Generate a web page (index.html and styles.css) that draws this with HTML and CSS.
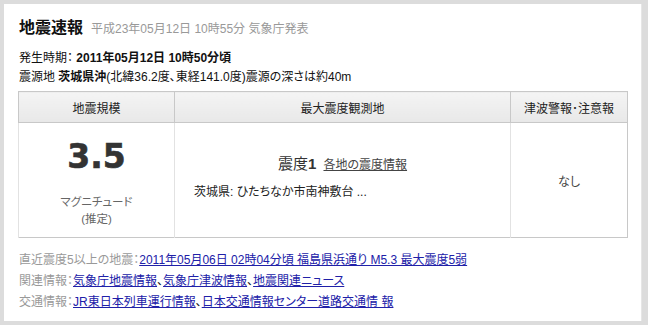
FILE: index.html
```html
<!DOCTYPE html>
<html lang="ja">
<head>
<meta charset="utf-8">
<title>地震速報</title>
<link rel="stylesheet" href="styles.css">
</head>
<body>
<div class="panel">
  <div class="title-row">
    <h1 class="title">地震速報</h1>
    <span class="issued">平成23年05月12日 10時55分 気象庁発表</span>
  </div>
  <div class="meta first">発生時期： <b>2011年05月12日 10時50分頃</b></div>
  <div class="meta">震源地 <b>茨城県沖</b>(北緯36.2度、東経141.0度)震源の深さは約40m</div>
  <table class="quake">
    <thead>
      <tr>
        <th class="c1">地震規模</th>
        <th class="c2">最大震度観測地</th>
        <th class="c3">津波警報･注意報</th>
      </tr>
    </thead>
    <tbody>
      <tr class="body-row">
        <td class="c1">
          <div class="mag">3.5</div>
          <div class="mag-label">マグニチュード<br>(推定)</div>
        </td>
        <td class="c2">
          <div class="intensity">震度<b>1</b> <a href="#" class="local">各地の震度情報</a></div>
          <div class="place">茨城県: ひたちなか市南神敷台 ...</div>
        </td>
        <td class="c3">なし</td>
      </tr>
    </tbody>
  </table>
  <div class="links">
    <div class="link-row"><span class="label">直近震度5以上の地震：</span><a href="#">2011年05月06日 02時04分頃 福島県浜通り M5.3 最大震度5弱</a></div>
    <div class="link-row"><span class="label">関連情報：</span><a href="#">気象庁地震情報</a>、<a href="#">気象庁津波情報</a>、<a href="#">地震関連ニュース</a></div>
    <div class="link-row"><span class="label">交通情報：</span><a href="#">JR東日本列車運行情報</a>、<a href="#">日本交通情報センター道路交通情 報</a></div>
  </div>
</div>
</body>
</html>
```

FILE: styles.css
```css
html, body {
  margin: 0;
  padding: 0;
}
body {
  background: #dcdcdc;
  padding: 4px 6px 4px 4px;
  font-family: "Liberation Sans", "Noto Sans CJK JP", sans-serif;
  font-size: 12px;
  color: #111;
  font-feature-settings: "palt";
}
.panel {
  background: #fff;
  border-right: 1px solid #e6e6e6;
  padding: 12px 15px 9px 14px;
  height: 296px;
}
.title-row {
  display: flex;
  align-items: baseline;
  gap: 8px;
  height: 24px;
  padding-left: 1px;
}
.title {
  margin: 0;
  font-size: 16px;
  font-weight: bold;
  line-height: 24px;
}
.issued {
  color: #999;
  font-size: 12px;
}
.meta {
  line-height: 19px;
  padding-left: 1px;
}
.meta.first {
  margin-top: 9px;
}
.meta b {
  font-weight: bold;
}
.quake {
  width: 609px;
  margin-top: 4px;
  border-collapse: collapse;
  border: 1px solid #c8c8c8;
  table-layout: fixed;
}
.quake th {
  height: 30px;
  padding: 0;
  font-weight: normal;
  font-size: 12px;
  background: linear-gradient(#f4f4f4, #e8e8e8);
  border: 1px solid #c8c8c8;
  color: #222;
}
.body-row {
  height: 115px;
}
.quake td {
  padding: 0;
  border-left: 1px solid #e2e2e2;
  text-align: center;
  vertical-align: top;
}
.quake .c1 { width: 155px; }
.quake .c2 { width: 335px; }
.quake .c3 { width: 116px; }
.quake td.c1 {
  padding-top: 16px;
}
.mag {
  font-family: "DejaVu Sans", sans-serif;
  font-weight: bold;
  font-size: 33px;
  color: #333;
  line-height: 35px;
  -webkit-text-stroke: 0.6px #333;
}
.mag-label {
  color: #666;
  font-size: 11.5px;
  line-height: 17px;
  margin-top: 20px;
}
.quake td.c2 {
  text-align: left;
  padding-left: 19px;
  padding-top: 31px;
}
.intensity {
  text-align: center;
  padding-right: 19px;
  font-size: 15px;
  color: #333;
  line-height: 20px;
}
.intensity b {
  font-weight: bold;
}
.local {
  font-size: 12px;
  color: #444;
  margin-left: 3px;
}
.place {
  margin-top: 9px;
  color: #222;
  line-height: 16px;
}
.quake td.c3 {
  color: #444;
  vertical-align: middle;
}
.links {
  margin-top: 12px;
  padding-left: 1px;
}
.link-row {
  line-height: 21px;
  white-space: nowrap;
}
.label {
  color: #999;
}
.links a {
  color: #2020a8;
}
```
